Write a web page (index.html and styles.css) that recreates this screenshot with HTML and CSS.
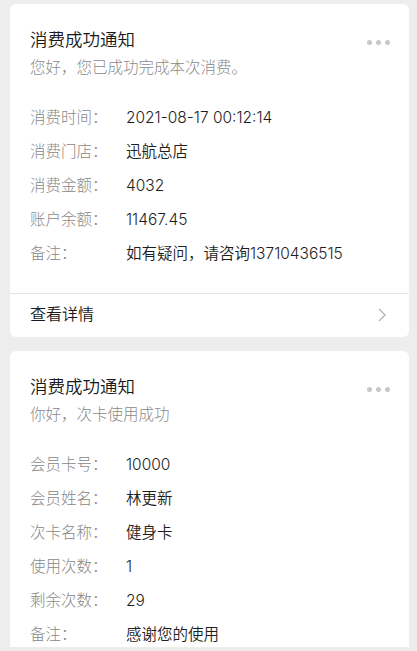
FILE: index.html
```html
<!DOCTYPE html>
<html lang="zh-CN">
<head>
    <meta charset="UTF-8">
    <meta name="viewport" content="width=device-width, initial-scale=1.0">
    <title>消费成功通知</title>
    <link rel="stylesheet" href="styles.css">
</head>
<body>

    <div class="list">
        <div class="card">
            <div class="card-head">
                <div class="card-title">消费成功通知</div>
                <div class="more"><span></span><span></span><span></span></div>
            </div>
            <div class="card-sub">您好，您已成功完成本次消费。</div>

            <div class="fields">
                <div class="field"><span class="label">消费时间：</span><span class="value">2021-08-17 00:12:14</span></div>
                <div class="field"><span class="label">消费门店：</span><span class="value">迅航总店</span></div>
                <div class="field"><span class="label">消费金额：</span><span class="value">4032</span></div>
                <div class="field"><span class="label">账户余额：</span><span class="value">11467.45</span></div>
                <div class="field"><span class="label">备注：</span><span class="value">如有疑问，请咨询13710436515</span></div>
            </div>

            <div class="card-link">
                <span>查看详情</span>
                <svg class="chevron" width="8" height="14" viewBox="0 0 8 14">
                    <path d="M1 1 L7 7 L1 13" fill="none" stroke="#b2b2b2" stroke-width="1.3"/>
                </svg>
            </div>
        </div>

        <div class="card card-cut">
            <div class="card-head">
                <div class="card-title">消费成功通知</div>
                <div class="more"><span></span><span></span><span></span></div>
            </div>
            <div class="card-sub">你好，次卡使用成功</div>

            <div class="fields">
                <div class="field"><span class="label">会员卡号：</span><span class="value">10000</span></div>
                <div class="field"><span class="label">会员姓名：</span><span class="value">林更新</span></div>
                <div class="field"><span class="label">次卡名称：</span><span class="value">健身卡</span></div>
                <div class="field"><span class="label">使用次数：</span><span class="value">1</span></div>
                <div class="field"><span class="label">剩余次数：</span><span class="value">29</span></div>
                <div class="field"><span class="label">备注：</span><span class="value">感谢您的使用</span></div>
            </div>
        </div>
    </div>

</body>
</html>
```

FILE: styles.css
```css
html, body {
    height: 100%;
}

body {
    font-family: "Noto Sans CJK SC", "Noto Sans", sans-serif;
    font-weight: 300;
    background-color: #ededed;
    margin: 0;
    padding: 0;
    overflow: hidden;
}

.list {
    display: flex;
    flex-direction: column;
    gap: 14px;
    padding: 4px 8px 0 10px;
    height: 643px;
    overflow: hidden;
}

.card {
    background-color: #fff;
    border-radius: 6px;
    flex-shrink: 0;
}

.card-cut {
    border-radius: 6px 6px 0 0;
    flex: 1;
    overflow: hidden;
}

.card-head {
    display: flex;
    align-items: center;
    justify-content: space-between;
    padding: 23px 19px 0 20px;
}

.card-title {
    font-size: 17.5px;
    font-weight: 350;
    line-height: 24px;
    color: #191919;
}

.more {
    display: flex;
    gap: 4px;
    margin-top: 7px;
}

.more span {
    width: 5px;
    height: 5px;
    border-radius: 50%;
    background-color: #c8c8c8;
}

.card-sub {
    font-size: 15.5px;
    line-height: 24px;
    color: #8a8a8a;
    padding: 0 20px;
    margin-top: 3px;
}

.fields {
    padding: 21px 20px 24px;
    border-bottom: 1px solid #e5e5e5;
}

.card-cut .fields {
    border-bottom: none;
}

.field {
    display: flex;
    align-items: baseline;
    height: 34px;
    font-size: 15.5px;
    line-height: 34px;
}

.label {
    width: 96px;
    flex-shrink: 0;
    color: #888;
}

.value {
    font-family: Inter, "Noto Sans CJK SC", sans-serif;
    font-weight: 350;
    color: #1e1e1e;
}

.card-link {
    display: flex;
    align-items: center;
    justify-content: space-between;
    height: 38px;
    padding: 0 23px 5px 20px;
    font-size: 16px;
    font-weight: 350;
    color: #191919;
}

.chevron {
    display: block;
    margin-top: 4px;
}
```
